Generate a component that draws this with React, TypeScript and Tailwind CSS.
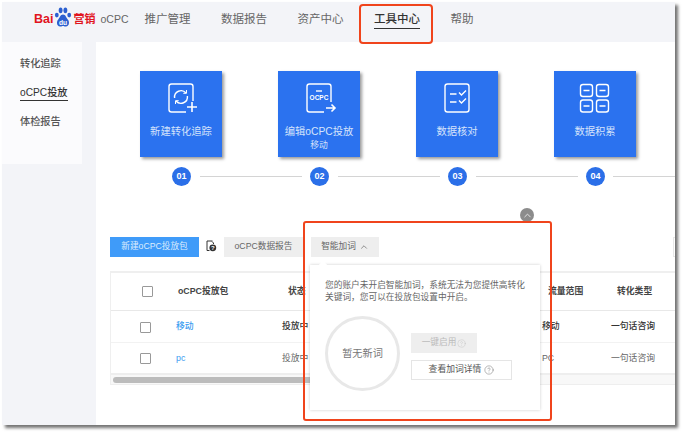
import React from 'react';
import { ChevronUp, CircleHelp } from 'lucide-react';

const NAV = ['推广管理', '数据报告', '资产中心', '工具中心', '帮助'];
const SIDE = ['转化追踪', 'oCPC投放', '体检报告'];

const TrackIcon = () => (
  <svg width="40" height="32" viewBox="0 0 40 32" fill="none" stroke="white" strokeWidth="1.4">
    <path d="M32 19V4.500A2.500 2.500 0 0 0 29.500 2H10.500A2.500 2.500 0 0 0 8 4.500V27.500A2.500 2.500 0 0 0 10.500 30H25" />
    <path d="M13.600 16A6.500 6.500 0 0 1 25 11" />
    <path d="M26.400 14A6.500 6.500 0 0 1 15 19" />
    <path d="M25.500 8V11.300H22.300M14.500 22V18.700H17.700" strokeWidth="1" />
    <path d="M26 25H36M31 20V30" strokeWidth="1.600" />
  </svg>
);

const EditIcon = () => (
  <svg width="40" height="32" viewBox="0 0 40 32" fill="none" stroke="white" strokeWidth="1.400">
    <path d="M32 20V4.500A2.500 2.500 0 0 0 29.500 2H10.500A2.500 2.500 0 0 0 8 4.500V27.500A2.500 2.500 0 0 0 10.500 30H25" />
    <path d="M17 9H23" />
    <text x="20" y="17.500" textAnchor="middle" fontSize="6.500" fontWeight="700" fill="white" stroke="none" fontFamily="'Liberation Sans', sans-serif">OCPC</text>
    <path d="M27 26H36M32.500 22.500L36 26L32.500 29.500" strokeWidth="1.600" />
  </svg>
);

const CheckIcon = () => (
  <svg width="40" height="32" viewBox="0 0 40 32" fill="none" stroke="white" strokeWidth="1.400">
    <rect x="8" y="2" width="24" height="28" rx="2.500" />
    <path d="M13 12H19.500M13 20H19.500" />
    <path d="M22 10.500L24.500 13L29 8.500M22 18.500L24.500 21L29 16.500" />
  </svg>
);

const GridIcon = () => (
  <svg width="40" height="32" viewBox="0 0 40 32" fill="none" stroke="white" strokeWidth="1.400">
    <rect x="5.500" y="2.500" width="12" height="12" rx="2.500" />
    <rect x="21.500" y="2.500" width="12" height="12" rx="2.500" />
    <rect x="5.500" y="18" width="12" height="12" rx="2.500" />
    <rect x="21.500" y="18" width="12" height="12" rx="2.500" />
    <path d="M8.500 8.500H14.500M24.500 8.500H30.500M8.500 24H14.500M24.500 24H30.500" />
  </svg>
);

const CARDS = [
  { title: '新建转化追踪', icon: <TrackIcon /> },
  { title: '编辑oCPC投放', sub: '移动', icon: <EditIcon /> },
  { title: '数据核对', icon: <CheckIcon /> },
  { title: '数据积累', icon: <GridIcon /> },
];

const Checkbox = () => <div className="w-[11px] h-[11px] border border-[#999] rounded-[1px] bg-white" />;

const BaiduLogo = () => (
  <div className="flex items-center h-[24px]">
    <span className="text-[12.500px] font-bold text-[#e1141e]">Bai</span>
    <svg width="18" height="20" viewBox="0 0 18 21" className="mx-[1px] -mt-[5px]">
      <ellipse cx="2.500" cy="8.500" rx="2" ry="2.500" fill="#2b5fd0" />
      <ellipse cx="6.500" cy="3.500" rx="2" ry="3" fill="#2b5fd0" />
      <ellipse cx="11.500" cy="3.500" rx="2" ry="3" fill="#2b5fd0" />
      <ellipse cx="15.500" cy="8.500" rx="2" ry="2.500" fill="#2b5fd0" />
      <path d="M9 8C6 8 6 11 4 13C2 15 2 20 6 20.500C7.500 20.700 8 20 9 20C10 20 10.500 20.700 12 20.500C16 20 16 15 14 13C12 11 12 8 9 8Z" fill="#2b5fd0" />
      <text x="9" y="18.500" textAnchor="middle" fontSize="7" fontWeight="700" fill="white" fontFamily="'Liberation Sans', sans-serif">du</text>
    </svg>
    <span className="text-[11px] font-bold text-[#e1141e] leading-none">营销</span>
  </div>
);

export default function App() {
  return (
    <div className="w-[687px] h-[437px] bg-white pl-[2px] pt-[2px] font-['Liberation_Sans','Noto_Sans_CJK_SC',sans-serif]">
      <div className="relative w-[673px] h-[423px] bg-white flex flex-col shadow-[3px_3px_3px_rgba(0,0,0,0.55)]">
        <header className="h-[40px] shrink-0 bg-[#f3f4f8] flex items-center pl-[32px] pb-[5px]">
          <BaiduLogo />
          <span className="ml-[5px] text-[10.500px] text-[#666]">oCPC</span>
          <nav className="ml-[16px] flex gap-[30.500px]">
            {NAV.map((item) => (
              <span
                key={item}
                className={
                  item === '工具中心'
                    ? 'text-[11.500px] leading-[18px] text-[#333] font-medium border-b border-[#333]'
                    : 'text-[11.500px] leading-[18px] text-[#666] border-b border-transparent'
                }
              >
                {item}
              </span>
            ))}
          </nav>
        </header>

        <div className="flex flex-1 min-h-0">
          <aside className="w-[94px] shrink-0 bg-[#f3f4f8]">
            <div className="w-[80px] h-[122px] bg-[#fbfbfd] pl-[18px] pt-[14px] flex flex-col gap-[13px]">
              {SIDE.map((item) => (
                <span
                  key={item}
                  className={
                    item === 'oCPC投放'
                      ? 'w-fit text-[10.200px] leading-[15px] h-[16px] text-[#333] font-medium border-b border-[#333]'
                      : 'w-fit text-[10.200px] leading-[15px] h-[16px] text-[#555] font-medium'
                  }
                >
                  {item}
                </span>
              ))}
            </div>
          </aside>

          <main className="flex-1 min-w-0 overflow-hidden pl-[14px] pt-[29px] bg-white">
            <div className="flex gap-[56px] pl-[30px]">
              {CARDS.map((card) => (
                <div
                  key={card.title}
                  className="w-[82px] h-[86px] shrink-0 bg-[#2b72ef] shadow-[2px_2px_3px_rgba(0,0,0,0.4)] flex flex-col items-center pt-[11px] text-[#d5e3fb]"
                >
                  {card.icon}
                  <span className="mt-[11px] text-[10.300px] leading-[14px] whitespace-nowrap">{card.title}</span>
                  {card.sub && <span className="text-[8.800px] leading-[13px]">{card.sub}</span>}
                </div>
              ))}
            </div>

            <div className="flex items-center pl-[62px] mt-[10px] h-[19px]">
              {['01', '02', '03', '04'].map((n, i) => (
                <div key={n} className={i === 3 ? 'flex items-center grow gap-[8px]' : 'flex items-center w-[138px] shrink-0 gap-[9px]'}>
                  <div className="w-[19px] h-[19px] shrink-0 rounded-full bg-[#2b6fe8] text-white text-[9px] font-bold flex items-center justify-center">
                    {n}
                  </div>
                  <div className={i === 3 ? 'h-px grow bg-[#d4d4d4]' : 'h-px w-[102px] bg-[#d4d4d4]'} />
                </div>
              ))}
            </div>

            <div className="mt-[22px] pl-[410px]">
              <div className="w-[14px] h-[14px] rounded-full bg-[#8c8c8c] flex items-center justify-center">
                <ChevronUp size={11} strokeWidth={2} color="#e8e8e8" />
              </div>
            </div>

            <div className="mt-[15px] flex items-center h-[20px]">
              <div className="w-[89px] h-[20px] bg-[#3f9bf9] text-[#dcecfd] text-[8.700px] flex items-center justify-center whitespace-nowrap">
                新建oCPC投放包
              </div>
              <svg width="12" height="12" viewBox="0 0 12 12" fill="none" className="ml-[6px] -mt-[2px]">
                <path d="M7.500 1H2V10.500H4.500M7 1.500L8.500 3V4" stroke="#333" strokeWidth="1" />
                <circle cx="7.800" cy="7.800" r="3.400" fill="#333" />
                <text x="7.800" y="10" textAnchor="middle" fontSize="6" fontWeight="700" fill="white" fontFamily="'Liberation Sans', sans-serif">?</text>
              </svg>
              <div className="ml-[7px] w-[79px] h-[20px] bg-[#eeeeee] text-[#666] text-[8.700px] flex items-center justify-center whitespace-nowrap">
                oCPC数据报告
              </div>
              <div className="ml-[8px] w-[68px] h-[20px] bg-[#eeeeee] text-[#666] text-[8.700px] flex items-center justify-center gap-[3px] whitespace-nowrap">
                智能加词
                <ChevronUp size={10} strokeWidth={1.500} color="#555" />
              </div>
              <div className="ml-auto w-[2px] h-[20px] border-l border-y border-[#e8e8e8]" />
            </div>

            <div className="mt-[14px] border-t-2 border-[#efefef] border-l text-[8.800px]">
              <div className="grid grid-cols-[65px_106px_260px_69px_1fr] items-center h-[38px] border-b border-[#e8e8e8] font-bold text-[#444]">
                <div className="pl-[31px]"><Checkbox /></div>
                <div className="pl-[2px]">oCPC投放包</div>
                <div className="pl-[6px]">状态</div>
                <div className="pl-[6px]">流量范围</div>
                <div className="pl-[6px]">转化类型</div>
              </div>
              <div className="grid grid-cols-[65px_106px_260px_69px_1fr] items-center h-[32px] pt-px border-b border-[#f2f2f2] text-[#333] font-medium">
                <div className="pl-[29px]"><Checkbox /></div>
                <div className="text-[#3b9cf0]">移动</div>
                <div>投放中</div>
                <div>移动</div>
                <div>一句话咨询</div>
              </div>
              <div className="grid grid-cols-[65px_106px_260px_69px_1fr] items-center h-[32px] pt-px border-b-2 border-[#eeeeee] text-[#666]">
                <div className="pl-[29px]"><Checkbox /></div>
                <div className="text-[#3b9cf0]">pc</div>
                <div>投放中</div>
                <div>PC</div>
                <div>一句话咨询</div>
              </div>
              <div className="h-[10px] bg-[#f8f8f8] border-b border-[#eeeeee] pt-[2px] pl-[2px]">
                <div className="w-[260px] h-[6px] rounded-full bg-[#bcbcbc]" />
              </div>
            </div>
          </main>
        </div>

        {/* popover over the table */}
        <div className="absolute left-[308px] top-[263px] w-[230px] h-[145px] bg-white shadow-[0_0_3px_rgba(0,0,0,0.2)] pl-[15px] pr-[10px] pt-[14px]">
          <div className="absolute left-[10px] -top-[3px] w-[6px] h-[6px] rotate-45 bg-white" />
          <p className="text-[8.700px] leading-[12px] text-[#666] w-[204px]">
            您的账户未开启智能加词，系统无法为您提供高转化关键词，您可以在投放包设置中开启。
          </p>
          <div className="flex items-center mt-[13px]">
            <div className="w-[75px] h-[75px] shrink-0 rounded-full border-[3px] border-[#e8e8e8] flex items-center justify-center text-[10.200px] text-[#777]">
              暂无新词
            </div>
            <div className="ml-[11px] flex flex-col gap-[7px] mt-[6px]">
              <div className="w-[66px] h-[20px] bg-[#eeeeee] text-[#bbb] text-[8.700px] flex items-center justify-center gap-[1px]">
                一键启用
                <CircleHelp size={9} strokeWidth={1} />
              </div>
              <div className="w-[101px] h-[20px] border border-[#e5e5e5] text-[#555] text-[8.800px] flex items-center justify-center gap-[3px]">
                查看加词详情
                <CircleHelp size={10} strokeWidth={1} />
              </div>
            </div>
          </div>
        </div>

        {/* red highlight boxes */}
        <div className="absolute left-[357px] top-[2px] w-[74px] h-[40px] border-2 border-[#f0441c] rounded-[4px]" />
        <div className="absolute left-[301px] top-[219px] w-[249px] h-[200px] border-2 border-[#f0441c] rounded-[3px]" />
      </div>
    </div>
  );
}
